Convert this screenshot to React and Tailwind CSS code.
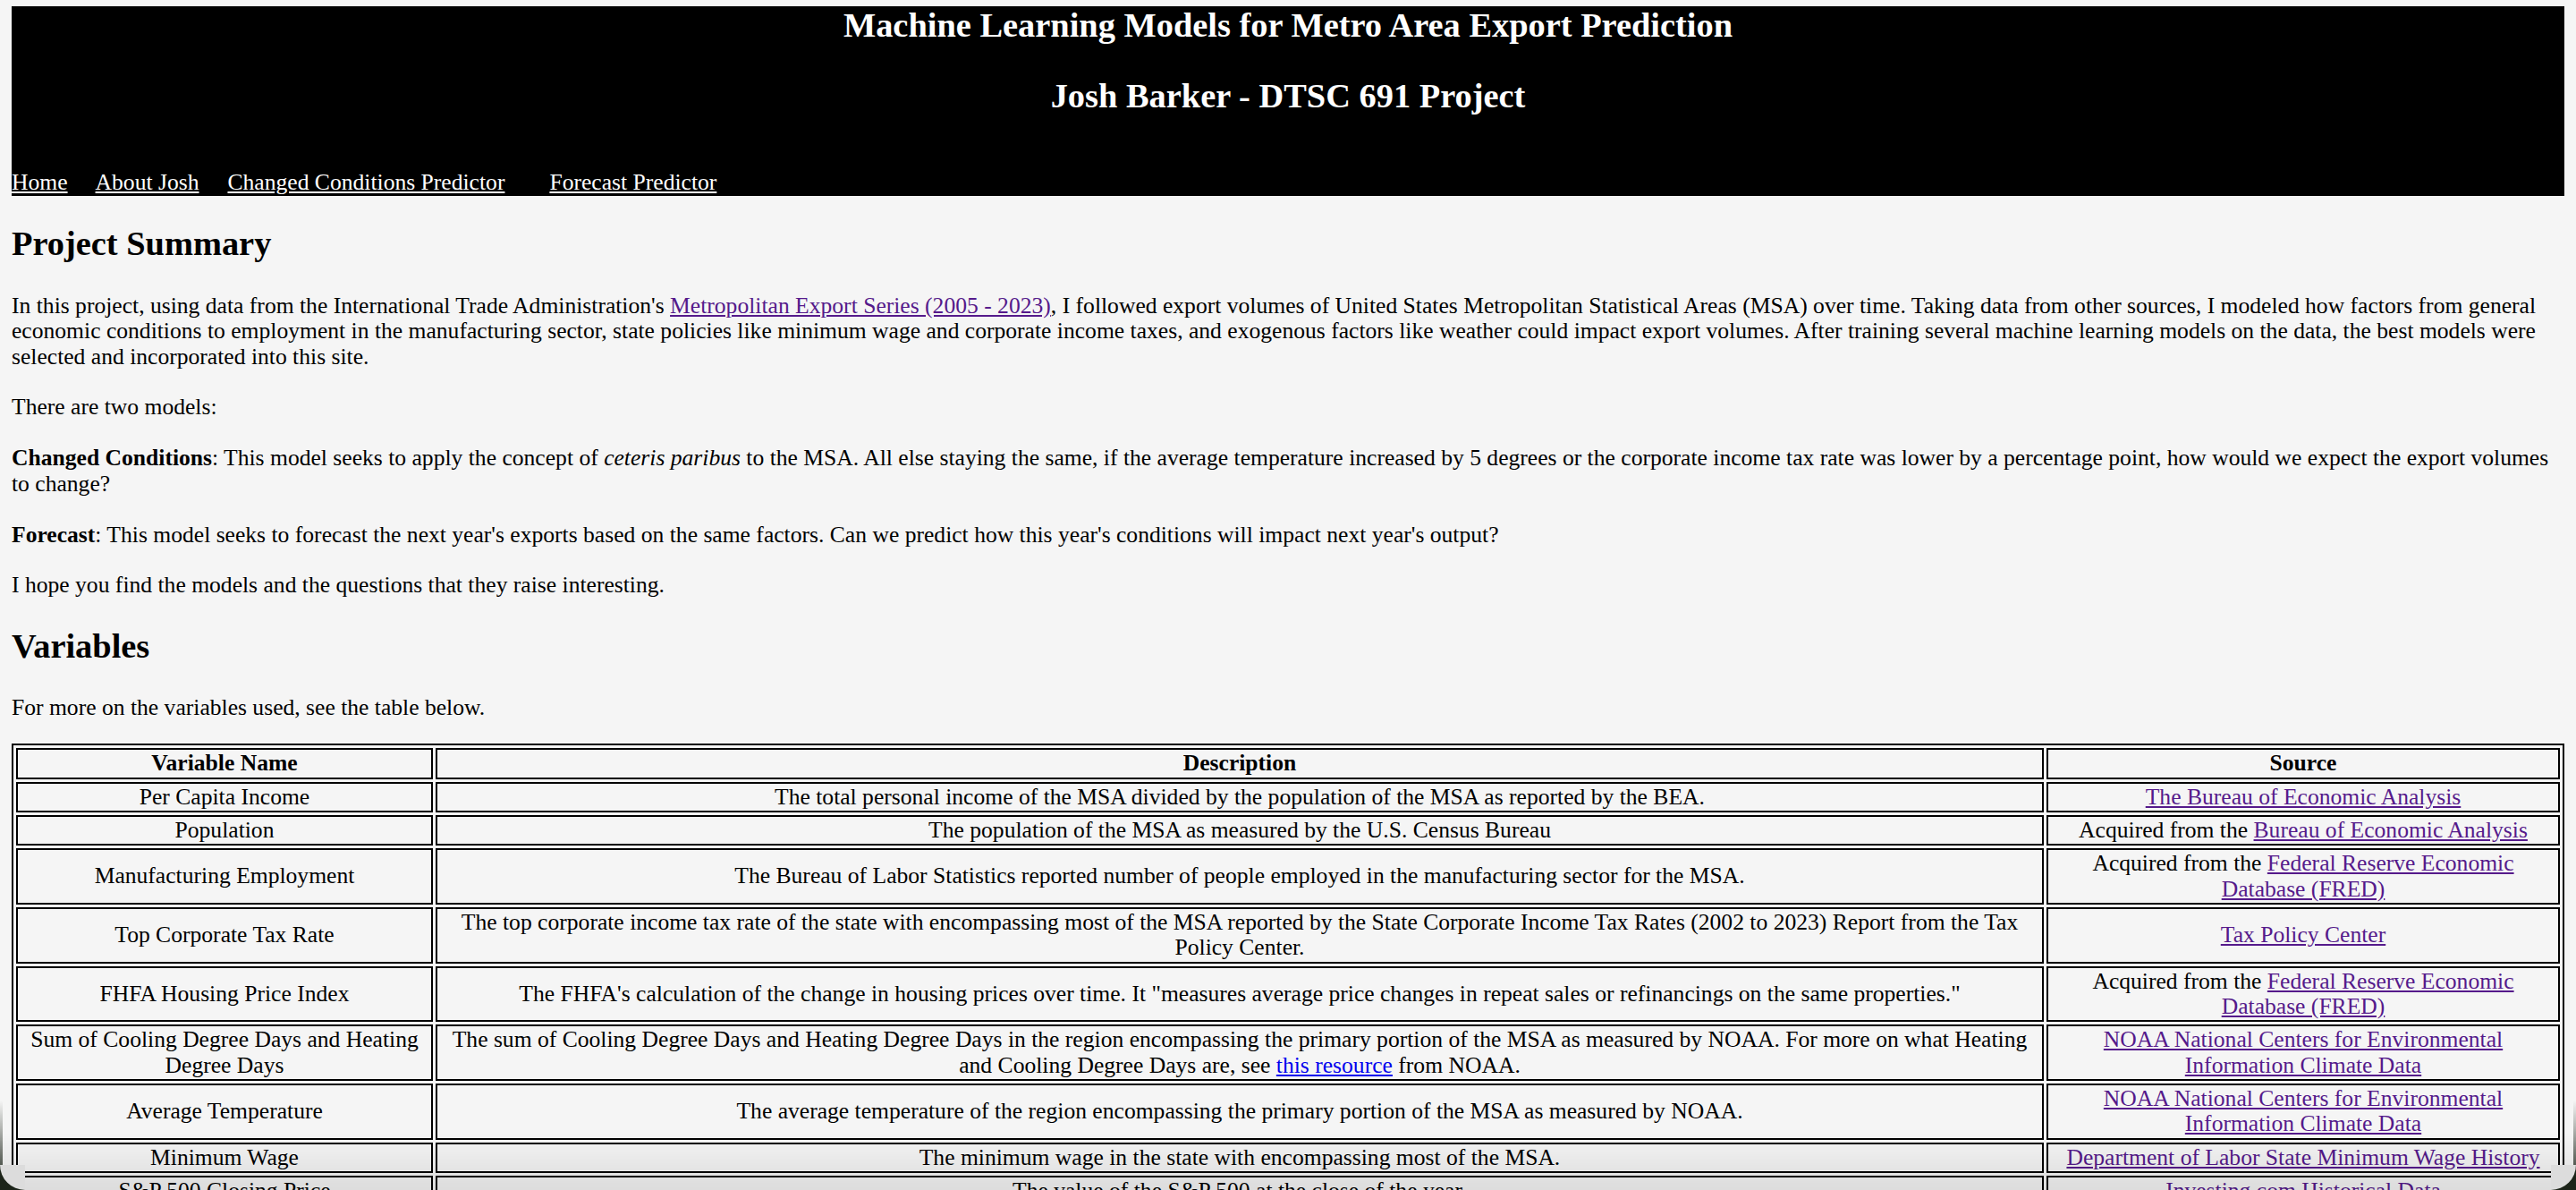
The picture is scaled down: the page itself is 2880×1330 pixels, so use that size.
import React from 'react';

const serif = "font-['Liberation_Serif','Times_New_Roman',serif]";

const rows = [
  {
    name: 'Per Capita Income',
    desc: 'The total personal income of the MSA divided by the population of the MSA as reported by the BEA.',
    source: <a href="#" className="text-[#551a8b] underline">The Bureau of Economic Analysis</a>,
  },
  {
    name: 'Population',
    desc: 'The population of the MSA as measured by the U.S. Census Bureau',
    source: <>Acquired from the <a href="#" className="text-[#551a8b] underline">Bureau of Economic Analysis</a></>,
  },
  {
    name: 'Manufacturing Employment',
    desc: 'The Bureau of Labor Statistics reported number of people employed in the manufacturing sector for the MSA.',
    source: <>Acquired from the <a href="#" className="text-[#551a8b] underline">Federal Reserve Economic Database (FRED)</a></>,
  },
  {
    name: 'Top Corporate Tax Rate',
    desc: 'The top corporate income tax rate of the state with encompassing most of the MSA reported by the State Corporate Income Tax Rates (2002 to 2023) Report from the Tax Policy Center.',
    source: <a href="#" className="text-[#551a8b] underline">Tax Policy Center</a>,
  },
  {
    name: 'FHFA Housing Price Index',
    desc: 'The FHFA\'s calculation of the change in housing prices over time. It "measures average price changes in repeat sales or refinancings on the same properties."',
    source: <>Acquired from the <a href="#" className="text-[#551a8b] underline">Federal Reserve Economic Database (FRED)</a></>,
  },
  {
    name: 'Sum of Cooling Degree Days and Heating Degree Days',
    desc: (
      <>
        The sum of Cooling Degree Days and Heating Degree Days in the region encompassing the primary portion of the MSA as
        measured by NOAA. For more on what Heating and Cooling Degree Days are, see{' '}
        <a href="#" className="text-[#0000ee] underline">this resource</a> from NOAA.
      </>
    ),
    source: <a href="#" className="text-[#551a8b] underline">NOAA National Centers for Environmental Information Climate Data</a>,
  },
  {
    name: 'Average Temperature',
    desc: 'The average temperature of the region encompassing the primary portion of the MSA as measured by NOAA.',
    source: <a href="#" className="text-[#551a8b] underline">NOAA National Centers for Environmental Information Climate Data</a>,
  },
  {
    name: 'Minimum Wage',
    desc: 'The minimum wage in the state with encompassing most of the MSA.',
    source: <a href="#" className="text-[#551a8b] underline">Department of Labor State Minimum Wage History</a>,
  },
  {
    name: 'S&P 500 Closing Price',
    desc: 'The value of the S&P 500 at the close of the year.',
    source: <a href="#" className="text-[#551a8b] underline">Investing.com Historical Data</a>,
  },
];

const cell = 'border-[2px] border-black px-[2px] py-[1px] text-center align-middle';

export default function App() {
  return (
    <div className={`${serif} min-h-screen bg-[#f5f5f5] px-[13px] pt-[7px] text-[25.6px] leading-[1.107] text-black`}>
      {/* Header */}
      <header className="bg-black text-white">
        <h2 className="mb-[36px] text-center text-[38.4px] font-bold">
          Machine Learning Models for Metro Area Export Prediction
        </h2>
        <h2 className="mb-[62px] text-center text-[38.4px] font-bold">Josh Barker - DTSC 691 Project</h2>
        <nav className="flex pb-[1px]">
          <a href="#" className="underline">Home</a>
          <a href="#" className="ml-[31px] underline">About Josh</a>
          <a href="#" className="ml-[32px] underline">Changed Conditions Predictor</a>
          <a href="#" className="ml-[50px] underline">Forecast Predictor</a>
        </nav>
      </header>

      <main>
        <h2 className="mt-[32px] mb-[34px] text-[38.4px] font-bold">Project Summary</h2>
        <p className="mb-[28px]">
          In this project, using data from the International Trade Administration's{' '}
          <a href="#" className="text-[#551a8b] underline">Metropolitan Export Series (2005 - 2023)</a>, I followed export
          volumes of United States Metropolitan Statistical Areas (MSA) over time. Taking data from other sources, I modeled
          how factors from general economic conditions to employment in the manufacturing sector, state policies like minimum
          wage and corporate income taxes, and exogenous factors like weather could impact export volumes. After training
          several machine learning models on the data, the best models were selected and incorporated into this site.
        </p>
        <p className="mb-[29px]">There are two models:</p>
        <p className="mb-[29px]">
          <b>Changed Conditions</b>: This model seeks to apply the concept of <i>ceteris paribus</i> to the MSA. All else
          staying the same, if the average temperature increased by 5 degrees or the corporate income tax rate was lower by a
          percentage point, how would we expect the export volumes to change?
        </p>
        <p className="mb-[28px]">
          <b>Forecast</b>: This model seeks to forecast the next year's exports based on the same factors. Can we predict how
          this year's conditions will impact next year's output?
        </p>
        <p>I hope you find the models and the questions that they raise interesting.</p>

        <h2 className="mt-[32px] mb-[34px] text-[38.4px] font-bold">Variables</h2>
        <p className="mb-[26px]">For more on the variables used, see the table below.</p>

        <table className="w-full table-fixed border-separate border-spacing-[3px] border-[2px] border-black">
          <colgroup>
            <col className="w-[466px]" />
            <col />
            <col className="w-[574px]" />
          </colgroup>
          <thead>
            <tr>
              <th className={`${cell} font-bold`}>Variable Name</th>
              <th className={`${cell} font-bold`}>Description</th>
              <th className={`${cell} font-bold`}>Source</th>
            </tr>
          </thead>
          <tbody>
            {rows.map((r) => (
              <tr key={r.name}>
                <td className={cell}>{r.name}</td>
                <td className={cell}>{r.desc}</td>
                <td className={cell}>{r.source}</td>
              </tr>
            ))}
          </tbody>
        </table>
      </main>

      {/* window bottom shading and rounded corners */}
      <div className="pointer-events-none fixed bottom-0 left-0 right-0 h-[64px] bg-gradient-to-b from-transparent to-black/10" />
      <div className="pointer-events-none fixed bottom-0 left-0 h-[100px] w-[3px] bg-gradient-to-b from-transparent to-[#1c2419]" />
      <div className="pointer-events-none fixed bottom-0 right-0 h-[100px] w-[3px] bg-gradient-to-b from-transparent to-[#1c2419]" />
      <div className="pointer-events-none fixed bottom-0 left-0 h-[28px] w-[28px] bg-[#1c2419]">
        <div className="h-full w-full rounded-bl-[28px] bg-[#dcdcdc]" />
      </div>
      <div className="pointer-events-none fixed bottom-0 right-0 h-[28px] w-[28px] bg-[#1c2419]">
        <div className="h-full w-full rounded-br-[28px] bg-[#dcdcdc]" />
      </div>
    </div>
  );
}
